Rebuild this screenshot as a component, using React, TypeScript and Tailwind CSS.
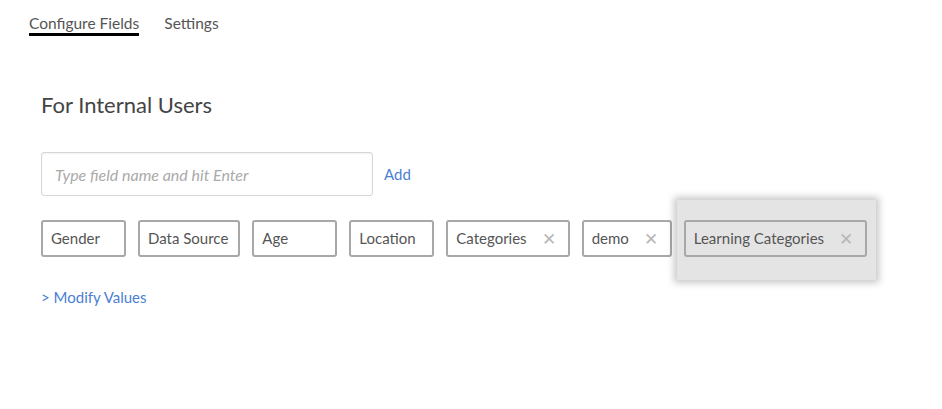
import React, { useState } from 'react';

type Field = {
  name: string;
  removable: boolean;
};

const initialFields: Field[] = [
  { name: 'Gender', removable: false },
  { name: 'Data Source', removable: false },
  { name: 'Age', removable: false },
  { name: 'Location', removable: false },
  { name: 'Categories', removable: true },
  { name: 'demo', removable: true },
  { name: 'Learning Categories', removable: true },
];

const Chip: React.FC<{ field: Field; onRemove: () => void }> = ({ field, onRemove }) => (
  <div
    className={`h-[37px] min-w-[85px] border-2 border-[#a8a8a8] rounded-[3px] flex items-center pl-[8px] text-[15px] text-[#555] ${field.removable ? 'pr-[12px]' : 'pr-[10px]'}`}
  >
    <span className="whitespace-nowrap">{field.name}</span>
    {field.removable && (
      <button onClick={onRemove} className="ml-[15px] text-[#b8b8b8] text-[17px] leading-none">
        ✕
      </button>
    )}
  </div>
);

const App: React.FC = () => {
  const [tab, setTab] = useState('fields');
  const [fields, setFields] = useState<Field[]>(initialFields);
  const [value, setValue] = useState('');

  const addField = () => {
    if (!value.trim()) return;
    setFields([...fields, { name: value.trim(), removable: true }]);
    setValue('');
  };

  const dragged = fields[fields.length - 1];
  const rest = fields.slice(0, -1);

  return (
    <div className="w-[942px] h-[409px] bg-white font-['Lato',sans-serif] text-[#444]">
      <div className="flex gap-[25px] pl-[29px] pt-[13px]">
        <button
          onClick={() => setTab('fields')}
          className={`leading-[20px] text-[15.5px] text-[#555] border-b-[3px] ${tab === 'fields' ? 'border-black' : 'border-transparent'}`}
        >
          Configure Fields
        </button>
        <button
          onClick={() => setTab('settings')}
          className={`leading-[20px] text-[15.5px] text-[#555] border-b-[3px] ${tab === 'settings' ? 'border-black' : 'border-transparent'}`}
        >
          Settings
        </button>
      </div>

      <div className="pl-[41px] pt-[58px]">
        <h2 className="text-[22px] text-[#444] leading-none">For Internal Users</h2>

        <div className="flex items-center mt-[36px]">
          <input
            value={value}
            onChange={e => setValue(e.target.value)}
            onKeyDown={e => e.key === 'Enter' && addField()}
            placeholder="Type field name and hit Enter"
            className="w-[332px] h-[44px] border border-[#d6d6d6] rounded-[3px] px-[13px] text-[16px] italic placeholder:text-[#aaa] shadow-[inset_0_1px_2px_rgba(0,0,0,0.06)] outline-none"
          />
          <button onClick={addField} className="ml-[11px] text-[15px] text-[#4a7fd4]">
            Add
          </button>
        </div>

        <div className="flex items-start gap-[12px] mt-[24px]">
          {rest.map(f => (
            <Chip key={f.name} field={f} onRemove={() => setFields(fields.filter(x => x !== f))} />
          ))}
          {dragged && (
            <div className="bg-[#e4e4e4] shadow-[0_0_7px_3px_rgba(0,0,0,0.22)] pl-[7px] pr-[9px] pt-[20px] pb-[23px] -ml-[7px] -mt-[20px] -mb-[23px]">
              <Chip field={dragged} onRemove={() => setFields(fields.filter(x => x !== dragged))} />
            </div>
          )}
        </div>

        <button className="mt-[29px] text-[15px] text-[#4a7fd4]">&gt; Modify Values</button>
      </div>
    </div>
  );
};

export default App;
